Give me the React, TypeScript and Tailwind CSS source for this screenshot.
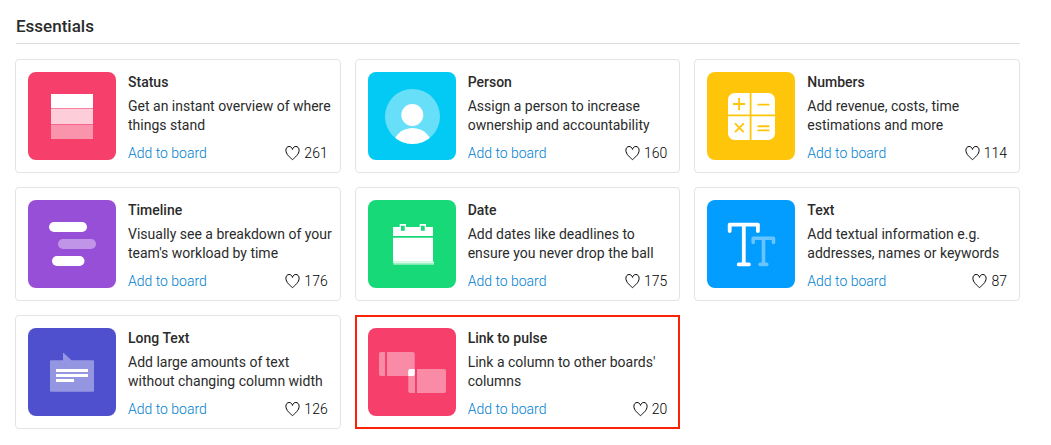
import type { ReactNode } from "react";
import clsx from "clsx";

interface Column {
  name: string;
  description: string;
  likes: number;
  tile: string;
  icon: ReactNode;
  highlighted?: boolean;
}

const columns: Column[] = [
  {
    name: "Status",
    description: "Get an instant overview of where things stand",
    likes: 261,
    tile: "bg-[#f73f6c]",
    icon: (
      <>
        <path d="M23 36h42v1H23z" fillOpacity="0.35" />
        <rect x="23" y="22" width="42" height="14" />
        <rect x="23" y="37" width="42" height="15" fillOpacity="0.74" />
        <path d="M23 52h42v1H23z" fillOpacity="0.2" />
        <rect x="23" y="53" width="42" height="14" fillOpacity="0.44" />
      </>
    ),
  },
  {
    name: "Person",
    description: "Assign a person to increase ownership and accountability",
    likes: 160,
    tile: "bg-[#03caf4]",
    icon: (
      <>
        <clipPath id="avatar">
          <circle cx="44.5" cy="44.5" r="27.5" />
        </clipPath>
        <circle cx="44.5" cy="44.5" r="27.5" fillOpacity="0.4" />
        <circle cx="44.3" cy="43" r="11" />
        <circle cx="44.5" cy="76.3" r="20.3" clipPath="url(#avatar)" />
      </>
    ),
  },
  {
    name: "Numbers",
    description: "Add revenue, costs, time estimations and more",
    likes: 114,
    tile: "bg-[#ffc50a]",
    icon: (
      <>
        <rect x="21" y="21" width="47" height="47" rx="6.5" />
        <g stroke="#ffc50a" strokeWidth="1.8">
          <path d="M43.6 21v47M21 43.4h47" />
          <path
            d="M26.7 32h10.8M32.1 26.6v10.8M51.3 32.6h10.4M28.5 51.9l7.7 7.7M36.2 51.9l-7.7 7.7M51.3 54.2h10.4M51.3 58.4h10.4"
            strokeLinecap="round"
            strokeWidth="1.9"
          />
        </g>
      </>
    ),
  },
  {
    name: "Timeline",
    description: "Visually see a breakdown of your team's workload by time",
    likes: 176,
    tile: "bg-[#974fd8]",
    icon: (
      <>
        <rect x="21" y="22" width="38" height="10" rx="5" />
        <rect x="30" y="39" width="38" height="10" rx="5" fillOpacity="0.4" />
        <rect x="24" y="56" width="32.5" height="10" rx="5" />
      </>
    ),
  },
  {
    name: "Date",
    description: "Add dates like deadlines to ensure you never drop the ball",
    likes: 175,
    tile: "bg-[#17d978]",
    icon: (
      <>
        <path d="M25 27h6.7v-3H38v3h13.7v-3H58v3h7v9H25z" />
        <path d="M33 25.7h3.7v5H33zM53 25.7h3.7v5H53z" fill="#17d978" />
        <path d="M25 37.7h40v24H25z" />
        <path d="M25 61.7h41v1.4H25z" fillOpacity="0.85" />
        <path d="M25.5 63.1H66v1.6H25.5z" fillOpacity="0.6" />
      </>
    ),
  },
  {
    name: "Text",
    description: "Add textual information e.g. addresses, names or keywords",
    likes: 87,
    tile: "bg-[#029dff]",
    icon: (
      <g fill="none" stroke="#fff" strokeLinecap="round" strokeLinejoin="round">
        <path
          d="M22.7 31v-6.4h28.2V31M36.8 24.6v39.6M31.7 64.4h10.2"
          strokeWidth="3.8"
        />
        <path
          d="M46.2 42.4v-4.2h20.3v4.2M56.5 38.2v26.2M53 64.4h6.8"
          strokeWidth="3.6"
          opacity="0.4"
        />
      </g>
    ),
  },
  {
    name: "Long Text",
    description: "Add large amounts of text without changing column width",
    likes: 126,
    tile: "bg-[#4f50cd]",
    icon: (
      <>
        <path
          d="M22.7 32.3H35V25.6q0-1.4 1-.4l7.4 7.1h21.9q.7 0 .7.7v30q0 .7-.7.7H22.7q-.7 0-.7-.7V33q0-.7.7-.7z"
          fillOpacity="0.4"
        />
        <path d="M28 41h32v3H28zM28 46h32v3H28zM28 51h18v3H28z" />
      </>
    ),
  },
  {
    name: "Link to pulse",
    description: "Link a column to other boards' columns",
    likes: 20,
    tile: "bg-[#f73f6c]",
    highlighted: true,
    icon: (
      <>
        <g fillOpacity="0.4">
          <path d="M13 24h4v24h-4q-2 0-2-2V26q0-2 2-2z" />
          <path d="M19 24h25.7q2 0 2 2v22H19z" />
          <path d="M42.3 41H47v24h-4.7q-2 0-2-2V43q0-2 2-2z" />
          <path d="M49 41h27q2 0 2 2v20q0 2-2 2H49z" />
        </g>
        <path d="M42.3 41h4.4v5q0 2-2 2h-4.4v-5q0-2 2-2z" />
      </>
    ),
  },
];

function HeartIcon() {
  return (
    <svg
      className="h-4 w-4"
      viewBox="0 0 16 16"
      fill="none"
      stroke="currentColor"
      strokeLinejoin="round"
      aria-hidden="true"
    >
      <path d="M8.5 14.6C6.1 12.5 1.9 9.3 1.9 5.3C1.9 3 3.3 1.5 5.1 1.5C6.9 1.5 8 2.6 8.5 4.4C9 2.6 10.1 1.5 11.9 1.5C13.7 1.5 15.1 3 15.1 5.3C15.1 9.3 10.9 12.5 8.5 14.6Z" />
    </svg>
  );
}

function ColumnCard({ column }: { column: Column }) {
  return (
    <li
      className={clsx(
        "flex gap-3 bg-white",
        column.highlighted
          ? "border-2 border-[#fb2307] py-[11px] pl-[11px] pr-[3px]"
          : "rounded border border-[#e4e4e4] py-3 pl-3 pr-1"
      )}
    >
      <div className={clsx("h-22 w-22 shrink-0 rounded-lg", column.tile)}>
        <svg viewBox="0 0 88 88" fill="#fff" aria-hidden="true">
          {column.icon}
        </svg>
      </div>
      <div className="flex min-w-0 flex-1 flex-col justify-between">
        <div>
          <h3 className="text-sm leading-5 font-medium">{column.name}</h3>
          <p className="mt-[5px] text-sm leading-[19px]">
            {column.description}
          </p>
        </div>
        <div className="flex h-[14px] items-center justify-between pr-2 text-sm leading-[14px] font-light">
          <button type="button" className="cursor-pointer text-[#0080d0]">
            Add to board
          </button>
          <button
            type="button"
            className="flex cursor-pointer items-center gap-1 text-black"
          >
            <HeartIcon />
            {column.likes}
          </button>
        </div>
      </div>
    </li>
  );
}

export default function App() {
  return (
    <main className="min-h-screen bg-white pt-4 pr-[31px] pb-4 pl-[15px] font-[Roboto,sans-serif] text-[#2b2b2b]">
      <h2 className="ml-px border-b border-[#dcdcdc] pb-[7px] text-[17px] leading-5 font-medium">
        Essentials
      </h2>
      <ul className="mt-[15px] grid grid-cols-3 gap-[14px]">
        {columns.map((column) => (
          <ColumnCard key={column.name} column={column} />
        ))}
      </ul>
    </main>
  );
}
